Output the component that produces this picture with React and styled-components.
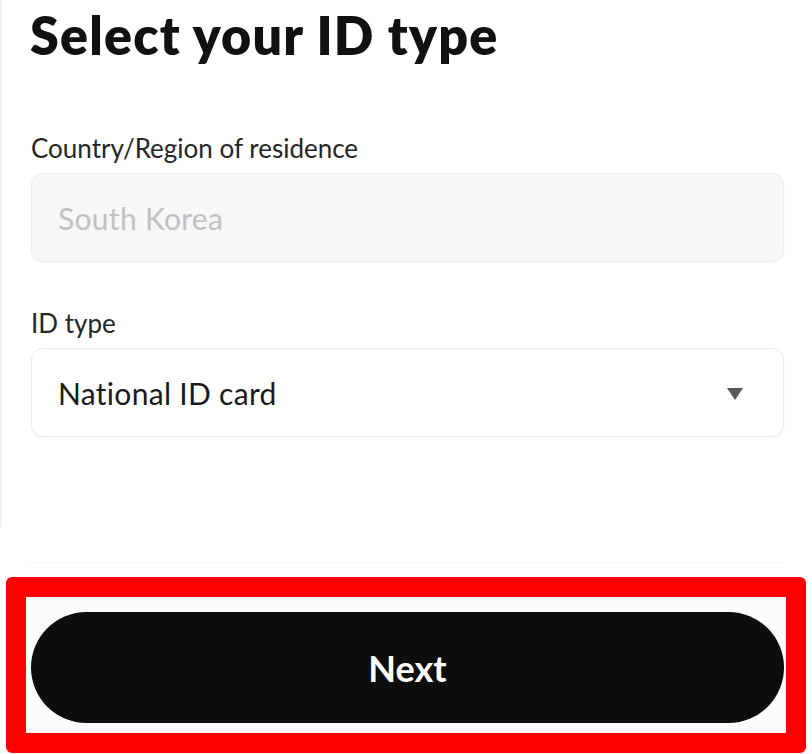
import styled, { createGlobalStyle } from "styled-components";

const GlobalStyle = createGlobalStyle`
  html, body {
    margin: 0;
    padding: 0;
    background: #ffffff;
    font-family: Lato, "Noto Sans", sans-serif;
    color: #111111;
  }
`;

const Page = styled.div`
  width: 812px;
  height: 754px;
  display: flex;
  flex-direction: column;
  overflow: hidden;
`;

const Card = styled.div`
  height: 527px;
  box-sizing: border-box;
  padding: 0 28px 0 29px;
  border-left: 2px solid #f1f1f1;
  display: flex;
  flex-direction: column;
`;

const Title = styled.h1`
  margin: 5px 0 0 -1px;
  font-size: 52px;
  line-height: 60px;
  font-weight: 800;
  letter-spacing: 1.2px;
`;

const Label = styled.div`
  margin-top: ${(p) => p.top}px;
  font-size: 26px;
  line-height: 30px;
  color: #262626;
`;

const Field = styled.div`
  margin-top: 10px;
  height: 89px;
  box-sizing: border-box;
  display: flex;
  align-items: center;
  justify-content: space-between;
  padding: 0 40px 0 26px;
  border-radius: 12px;
  border: 1.5px solid #ececec;
  background: ${(p) => (p.disabled ? "#f7f7f7" : "#ffffff")};
  color: ${(p) => (p.disabled ? "#c2c2c2" : "#1a1a1a")};
  font-size: 30px;
  letter-spacing: 0.3px;
  box-shadow: 0 1px 3px rgba(0, 0, 0, 0.04);
`;

const Caret = styled.span`
  width: 0;
  height: 0;
  border-left: 8px solid transparent;
  border-right: 8px solid transparent;
  border-top: 12px solid #5a5a5a;
  margin-top: 2px;
`;

const Spacer = styled.div`
  height: 36px;
  margin: 0 30px 14px;
  border-bottom: 1px solid #f6f6f6;
  box-sizing: border-box;
`;

const Highlight = styled.div`
  margin: 0 6px;
  border: 20px solid #ff0000;
  border-radius: 6px;
  padding: 15px 2px 10px 5px;
  background: #fcfcfc;
`;

const NextButton = styled.button`
  width: 100%;
  height: 111px;
  border: none;
  border-radius: 56px;
  background: #0d0d0d;
  color: #ffffff;
  font-family: Lato, "Noto Sans", sans-serif;
  font-size: 36px;
  font-weight: 700;
  display: block;
`;

export default function App() {
  return (
    <Page>
      <GlobalStyle />
      <Card>
        <Title>Select your ID type</Title>
        <Label top={68}>Country/Region of residence</Label>
        <Field disabled>South Korea</Field>
        <Label top={46}>ID type</Label>
        <Field>
          National ID card
          <Caret />
        </Field>
      </Card>
      <Spacer />
      <Highlight>
        <NextButton>Next</NextButton>
      </Highlight>
    </Page>
  );
}
